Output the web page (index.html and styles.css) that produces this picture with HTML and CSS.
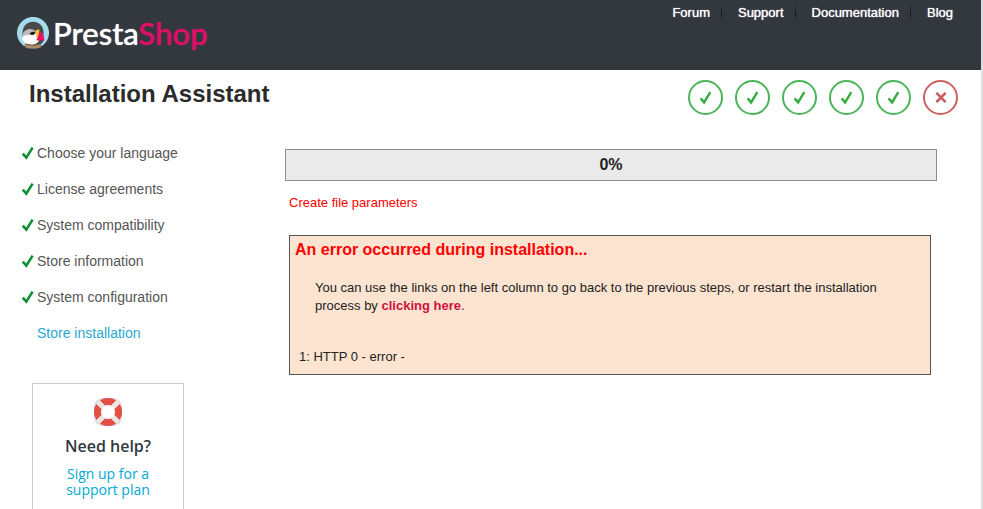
FILE: index.html
```html
<!DOCTYPE html>
<html lang="en">

<head>
    <meta charset="UTF-8">
    <meta name="viewport" content="width=device-width, initial-scale=1.0">
    <title>PrestaShop Installation Assistant</title>
    <link rel="stylesheet" href="styles.css">
</head>

<body>
    <!-- shared icons -->
    <svg class="sprite" aria-hidden="true">
        <symbol id="step-ok" viewBox="0 0 35 35">
            <circle cx="17.5" cy="17.5" r="16.5" fill="none" stroke="#4cb459" stroke-width="2"/>
            <path d="M12.6 18.4 L16.1 22.4 L22.3 12.2" fill="none" stroke="#35ad42" stroke-width="2.4"/>
        </symbol>
        <symbol id="step-error" viewBox="0 0 35 35">
            <circle cx="17.5" cy="17.5" r="16.5" fill="none" stroke="#cb6161" stroke-width="2"/>
            <path d="M13.4 12.8 L22.6 22.2 M22.6 12.8 L13.4 22.2" fill="none" stroke="#c85c5c" stroke-width="2.6"/>
        </symbol>
        <symbol id="tick" viewBox="0 0 12 14">
            <path d="M0.8 7.6 L4.3 11.6 L10.6 1.6" fill="none" stroke="#0a8f37" stroke-width="2.6"/>
        </symbol>
    </svg>

    <div id="header">
        <a class="logo" href="#" aria-label="PrestaShop">
            <svg class="logo-mark" viewBox="0 0 32 32" aria-hidden="true">
                <path d="M6.5 28.8 A16 16 0 1 1 25.5 28.8 Z" fill="#a5dcec"/>
                <path d="M5.4 18 C5 10 9.5 4.8 16 4.8 C23 4.8 26.5 10 26.6 16 L26 25 L23 28 H9 Z" fill="#4a4a4b"/>
                <path d="M5.2 18.5 C6.5 13 12 10.5 17.5 13.2 L19 18 L13 19.5 L5 21 Z" fill="#b9bbbd"/>
                <path d="M5 20.5 C8 18 10.5 17.5 13 18.5 L17.5 17.3 L20 15 L22 24 C19.5 27.6 14.5 29 10 27.6 C6.8 25.8 5.2 23.3 5 20.5 Z" fill="#fff"/>
                <path d="M12.5 16.6 Q15.8 13.3 18.4 16 Q15.6 19.6 12.5 16.6 Z" fill="#151515"/>
                <path d="M18.2 14.2 Q20 11.5 22.4 12.8 L21.6 22.5 L19.3 19.5 Z" fill="#f8c72c"/>
                <path d="M22.2 15 C25.6 15 27.6 19.3 27.2 24.2 C24.5 22.3 22.5 24.3 19.3 23 C21 20.5 21.6 18 22.2 15 Z" fill="#ed1266"/>
                <path d="M8.5 26.8 Q16 29.5 23.5 26.8 L24 30.2 Q16 33.4 8 30.2 Z" fill="#ac8f6b"/>
                <path d="M8.3 27 Q16 29.6 23.7 27" fill="none" stroke="#6a5742"/>
            </svg>
            <span class="logo-name">Presta<span class="pink">Shop</span></span>
        </a>
        <ul class="links">
            <li><a href="#">Forum</a></li>
            <li><a href="#">Support</a></li>
            <li><a href="#">Documentation</a></li>
            <li><a href="#">Blog</a></li>
        </ul>
    </div>

    <div id="title">
        <h1>Installation Assistant</h1>
        <div class="steps">
            <svg><use href="#step-ok"/></svg>
            <svg><use href="#step-ok"/></svg>
            <svg><use href="#step-ok"/></svg>
            <svg><use href="#step-ok"/></svg>
            <svg><use href="#step-ok"/></svg>
            <svg><use href="#step-error"/></svg>
        </div>
    </div>

    <div id="container">
        <div id="leftpannel">
            <ol class="menu">
                <li><svg><use href="#tick"/></svg><a href="#">Choose your language</a></li>
                <li><svg><use href="#tick"/></svg><a href="#">License agreements</a></li>
                <li><svg><use href="#tick"/></svg><a href="#">System compatibility</a></li>
                <li><svg><use href="#tick"/></svg><a href="#">Store information</a></li>
                <li><svg><use href="#tick"/></svg><a href="#">System configuration</a></li>
                <li class="selected">Store installation</li>
            </ol>
            <div class="help">
                <svg class="buoy" viewBox="0 0 28 28" aria-hidden="true">
                    <rect x="0.5" y="0.5" width="27" height="27" rx="9" fill="none" stroke="#c8c8c8"/>
                    <circle cx="14" cy="14" r="10.5" fill="none" stroke="#e44f43" stroke-width="7"/>
                    <path d="M4 4 L9.5 9.5 M24 4 L18.5 9.5 M4 24 L9.5 18.5 M24 24 L18.5 18.5" stroke="#e9e9ea" stroke-width="5"/>
                    <circle cx="14" cy="14" r="6.5" fill="#fff"/>
                </svg>
                <h2>Need help?</h2>
                <a href="#">Sign up for a support plan</a>
            </div>
        </div>

        <div id="content">
            <div class="progress">0%</div>
            <p class="current">Create file parameters</p>
            <div class="error">
                <h3>An error occurred during installation...</h3>
                <p>You can use the links on the left column to go back to the previous steps, or restart the installation process by <a href="#">clicking here</a>.</p>
                <div class="log">1: HTTP 0 - error -</div>
            </div>
        </div>
    </div>
</body>

</html>
```

FILE: styles.css
```css
* {
    box-sizing: border-box;
}

body {
    margin: 0;
    min-height: 100vh;
    border-right: 2px solid #dddddd;
    background-color: #fff;
    color: #222;
    font-family: "Liberation Sans", Arial, sans-serif;
    font-size: 13px;
    line-height: 18px;
}

h1, h2, h3, p, ul, ol {
    margin: 0;
    padding: 0;
}

ul, ol {
    list-style: none;
}

a {
    text-decoration: none;
}

.sprite {
    display: none;
}

/* Header */
#header {
    display: flex;
    justify-content: space-between;
    align-items: flex-start;
    height: 70px;
    padding: 0 17px;
    background-color: #33383f;
}

.logo {
    display: flex;
    align-items: center;
    gap: 4px;
    padding-top: 17px;
}

.logo-mark {
    width: 32px;
    height: 32px;
}

.logo-name {
    color: #fff;
    font-family: Lato, sans-serif;
    font-size: 31px;
    font-weight: 500;
    line-height: 32px;
    text-shadow: 0 0 1px currentColor;
}

.pink {
    color: #df0f67;
}

.links {
    display: flex;
    padding-top: 4px;
}

.links li {
    padding: 0 11px 0 16px;
}

.links li + li {
    border-left: 1px solid;
    border-image: linear-gradient(#33383f, #15171a, #33383f) 1;
}

.links a {
    color: #fff;
    text-shadow: 0 0 1px #fff;
}

/* Title and steps */
#title {
    display: flex;
    justify-content: space-between;
    padding: 9px 23px 0 29px;
}

h1 {
    color: #2b2b2b;
    font-size: 24px;
    line-height: 30px;
}

.steps {
    display: flex;
    gap: 12px;
    padding-top: 1px;
}

.steps svg {
    width: 35px;
    height: 35px;
}

/* Columns */
#container {
    display: flex;
    padding: 28px 44px 0 22px;
}

#leftpannel {
    flex: 0 0 263px;
}

.menu li {
    display: flex;
    align-items: center;
    gap: 3px;
    height: 36px;
    padding-bottom: 16px;
    font-size: 14px;
}

.menu svg {
    width: 12px;
    height: 14px;
}

.menu a {
    color: #555;
}

.menu .selected {
    padding-left: 15px;
    color: #2aa8d0;
}

.help {
    width: 152px;
    margin: 24px 0 0 10px;
    padding: 14px 24px 20px;
    border: 1px solid #ccc;
    text-align: center;
    font-family: "Open Sans", sans-serif;
    font-size: 14px;
    line-height: 16px;
}

.buoy {
    display: block;
    width: 28px;
    height: 28px;
    margin: 0 auto 9px;
}

.help h2 {
    margin-bottom: 9px;
    color: #33383f;
    font-size: 16px;
    font-weight: 600;
    line-height: 22px;
}

.help a {
    color: #00a9d0;
}

#content {
    flex: 1;
    padding-top: 6px;
}

.progress {
    height: 32px;
    border: 1px solid #8c8c8c;
    background-color: #eaeaea;
    font-size: 16px;
    font-weight: bold;
    line-height: 30px;
    text-align: center;
}

.current {
    padding: 13px 4px 23px;
    color: #f00;
}

.error {
    margin: 0 6px 0 4px;
    padding: 4px 5px 8px;
    border: 1px solid #555;
    background-color: #fce4d0;
}

.error h3 {
    color: #f00;
    font-size: 16px;
    line-height: 20px;
}

.error p {
    padding: 19px 20px 33px;
}

.error p a {
    color: #d0103f;
    font-weight: bold;
}

.log {
    padding-left: 4px;
}
```
